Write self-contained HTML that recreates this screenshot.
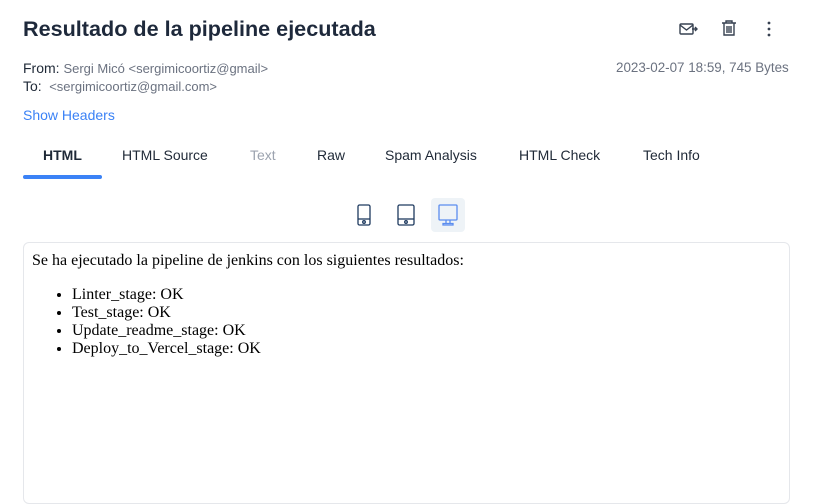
<!DOCTYPE html>
<html><head><style>
body{margin:0;width:819px;height:485px;overflow:hidden;background:#fff;font-family:"Liberation Sans",sans-serif;position:relative;color:#1f2937}
.a{position:absolute;white-space:nowrap}
h1{position:absolute;left:23px;top:16px;margin:0;font-size:21.6px;font-weight:bold;color:#1e293b}
.tab{position:absolute;top:147px;font-size:14px;color:#1f2937}
</style></head><body>
<h1>Resultado de la pipeline ejecutada</h1>
<svg class="a" style="left:678px;top:20px" width="20" height="18" viewBox="0 0 20 18" fill="none" stroke="#374151" stroke-width="1.4"><rect x="2" y="4" width="13" height="10" rx="1"/><path d="M2 5l6.5 5 6.5-5"/><path d="M14 9h5m-2-2 2 2-2 2"/></svg>
<svg class="a" style="left:720px;top:19px" width="18" height="18" viewBox="0 0 18 18" fill="none" stroke="#374151" stroke-width="1.4"><path d="M2 4h14M6 4V2h6v2M4 4v12h10V4M7 7v7M9 7v7M11 7v7"/></svg>
<svg class="a" style="left:765px;top:20px" width="8" height="18"><circle cx="4" cy="3" r="1.4" fill="#374151"/><circle cx="4" cy="9" r="1.4" fill="#374151"/><circle cx="4" cy="15" r="1.4" fill="#374151"/></svg>
<div class="a" style="left:23px;top:60px;font-size:14px"><span style="color:#1f2937">From:</span> <span style="color:#6b7280;font-size:13px">Sergi Micó &lt;sergimicoortiz@gmail&gt;</span></div>
<div class="a" style="left:23px;top:78px;font-size:14px">To: <span style="color:#6b7280;font-size:13px">&nbsp;&lt;sergimicoortiz@gmail.com&gt;</span></div>
<div class="a" style="left:616px;top:60px;font-size:13.4px;color:#6b7280">2023-02-07 18:59, 745 Bytes</div>
<div class="a" style="left:23px;top:107px;font-size:14px;color:#3b82f6">Show Headers</div>
<div class="tab" style="left:43px;font-weight:bold">HTML</div>
<div class="tab" style="left:122px">HTML Source</div>
<div class="tab" style="left:250px;color:#9ca3af">Text</div>
<div class="tab" style="left:317px">Raw</div>
<div class="tab" style="left:385px">Spam Analysis</div>
<div class="tab" style="left:519px">HTML Check</div>
<div class="tab" style="left:643px">Tech Info</div>
<div class="a" style="left:23px;top:175px;width:79px;height:4px;background:#3b82f6;border-radius:3px"></div>
<svg class="a" style="left:357px;top:204px" width="14" height="22" fill="none" stroke="#1e3a5f" stroke-width="1.3"><rect x="1" y="1" width="12" height="20" rx="1.5"/><path d="M1 15h12"/><circle cx="7" cy="18" r="1.3"/></svg>
<svg class="a" style="left:397px;top:204px" width="18" height="22" fill="none" stroke="#1e3a5f" stroke-width="1.3"><rect x="1" y="1" width="16" height="20" rx="1.5"/><path d="M1 15h16"/><circle cx="9" cy="18" r="1.3"/></svg>
<div class="a" style="left:431px;top:198px;width:34px;height:34px;background:#eef3f7;border-radius:4px"></div>
<svg class="a" style="left:438px;top:204px" width="20" height="22" fill="none" stroke="#5b8def" stroke-width="1.3"><rect x="1" y="1" width="18" height="15" rx="1"/><path d="M8 16v3M12 16v3M5 19.5h10v1.5H5z"/></svg>
<div class="a" style="left:23px;top:242px;width:765px;height:260px;border:1px solid #e5e7eb;border-radius:6px;font-family:'Liberation Serif',serif;font-size:16px;color:#000">
<div style="position:absolute;left:8px;top:9px">Se ha ejecutado la pipeline de jenkins con los siguientes resultados:</div>
<ul style="position:absolute;left:8px;top:43px;margin:0;padding-left:40px;line-height:18px">
<li>Linter_stage: OK</li><li>Test_stage: OK</li><li>Update_readme_stage: OK</li><li>Deploy_to_Vercel_stage: OK</li></ul>
</div>
</body></html>
